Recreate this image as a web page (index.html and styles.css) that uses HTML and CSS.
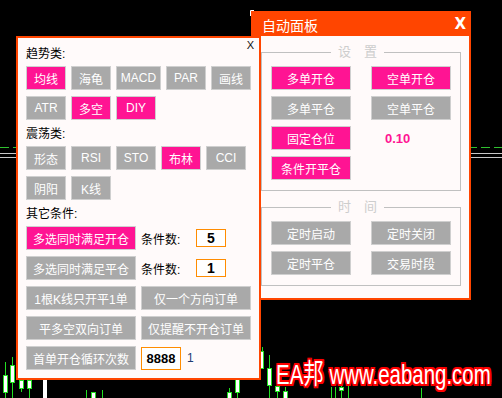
FILE: index.html
```html
<!DOCTYPE html>
<html>
<head>
  <meta charset="utf-8">
  <title>自动面板</title>
  <link rel="stylesheet" href="styles.css">
</head>
<body>
  <div class="screen">
    <svg class="chart" width="502" height="398" viewBox="0 0 502 398">
      <line x1="0" y1="147.5" x2="502" y2="147.5" stroke="#2fbf2f" stroke-dasharray="9 4"/>
      <line x1="0" y1="153.5" x2="502" y2="153.5" stroke="#c8c8c8"/>
      <line x1="0" y1="157.5" x2="502" y2="157.5" stroke="#c8c8c8"/>
      <path d="M250.5 16 V10.5 H254" stroke="#fff" fill="none"/>
      <g stroke="#22e022" fill="#fff">
        <line x1="5.5" y1="362" x2="5.5" y2="398"/>
        <rect x="3.5" y="375.5" width="4" height="17"/>
        <line x1="12.5" y1="357" x2="12.5" y2="398"/>
        <rect x="10.5" y="365.5" width="4" height="17"/>
        <line x1="21.5" y1="376" x2="21.5" y2="392"/>
        <rect x="19.5" y="380.5" width="4" height="8"/>
        <line x1="29.5" y1="376" x2="29.5" y2="398"/>
        <rect x="27.5" y="380.5" width="4" height="8"/>
        <rect x="43.5" y="378.5" width="3" height="24" stroke="#fff"/>
        <line x1="86.5" y1="390" x2="86.5" y2="398"/>
        <rect x="91.5" y="392.5" width="4" height="8"/>
        <line x1="102.5" y1="390" x2="102.5" y2="398"/>
        <line x1="229.5" y1="388" x2="229.5" y2="398"/>
        <rect x="227.5" y="392.5" width="4" height="8"/>
        <line x1="237.5" y1="370" x2="237.5" y2="398"/>
        <rect x="235.5" y="379.5" width="4" height="13"/>
        <line x1="262.5" y1="347" x2="262.5" y2="352"/>
        <rect x="260.5" y="351.5" width="3" height="17"/>
        <line x1="269.5" y1="355" x2="269.5" y2="398"/>
        <rect x="267.5" y="368.5" width="4" height="17"/>
        <line x1="277.5" y1="383" x2="277.5" y2="398"/>
        <rect x="275.5" y="386.5" width="4" height="5"/>
        <line x1="285.5" y1="387" x2="285.5" y2="398"/>
        <rect x="283.5" y="391.5" width="4" height="8"/>
        <line x1="331.5" y1="387" x2="331.5" y2="398"/>
        <line x1="335.5" y1="387" x2="335.5" y2="398"/>
        <line x1="341.5" y1="384" x2="341.5" y2="398"/>
        <rect x="339.5" y="387.5" width="4" height="3"/>
        <line x1="348.5" y1="386" x2="348.5" y2="398"/>
        <line x1="421.5" y1="388" x2="421.5" y2="398"/>
      </g>
    </svg>

    <div class="panel auto-panel">
      <div class="panel-head">
        <span class="panel-title">自动面板</span>
        <span class="panel-close">X</span>
      </div>
      <div class="panel-body">
        <fieldset class="group">
          <legend>设　置</legend>
          <div class="grid-2">
            <button class="btn on">多单开仓</button>
            <button class="btn on">空单开仓</button>
            <button class="btn">多单平仓</button>
            <button class="btn">空单平仓</button>
            <button class="btn on">固定仓位</button>
            <span class="lot-value">0.10</span>
            <button class="btn on">条件开平仓</button>
          </div>
        </fieldset>
        <fieldset class="group second">
          <legend>时　间</legend>
          <div class="grid-2">
            <button class="btn">定时启动</button>
            <button class="btn">定时关闭</button>
            <button class="btn">定时平仓</button>
            <button class="btn">交易时段</button>
          </div>
        </fieldset>
      </div>
    </div>

    <div class="panel filter-panel">
      <span class="close-x">X</span>

      <div class="sec-title">趋势类:</div>
      <div class="btn-row">
        <button class="btn s on">均线</button>
        <button class="btn s">海龟</button>
        <button class="btn m">MACD</button>
        <button class="btn s">PAR</button>
        <button class="btn s">画线</button>
      </div>
      <div class="btn-row">
        <button class="btn s">ATR</button>
        <button class="btn s on">多空</button>
        <button class="btn s on">DIY</button>
      </div>

      <div class="sec-title">震荡类:</div>
      <div class="btn-row">
        <button class="btn s">形态</button>
        <button class="btn s">RSI</button>
        <button class="btn s">STO</button>
        <button class="btn s on">布林</button>
        <button class="btn s">CCI</button>
      </div>
      <div class="btn-row">
        <button class="btn s">阴阳</button>
        <button class="btn s">K线</button>
      </div>

      <div class="sec-title">其它条件:</div>
      <div class="btn-row">
        <button class="btn l on">多选同时满足开仓</button>
        <span class="cnt-label">条件数:</span>
        <span class="num-box">5</span>
      </div>
      <div class="btn-row">
        <button class="btn l">多选同时满足平仓</button>
        <span class="cnt-label">条件数:</span>
        <span class="num-box">1</span>
      </div>
      <div class="btn-row">
        <button class="btn l">1根K线只开平1单</button>
        <button class="btn l">仅一个方向订单</button>
      </div>
      <div class="btn-row">
        <button class="btn l">平多空双向订单</button>
        <button class="btn l">仅提醒不开仓订单</button>
      </div>
      <div class="btn-row">
        <button class="btn l">首单开仓循环次数</button>
        <span class="num-box big">8888</span>
        <span class="loop-val">1</span>
      </div>
    </div>

    <div class="watermark">EA邦 www.eabang.com</div>
  </div>
</body>
</html>
```

FILE: styles.css
```css
* {
  box-sizing: border-box;
}

body {
  margin: 0;
  background: #000;
  font-family: "Liberation Sans", "Noto Sans CJK SC", sans-serif;
  font-size: 12px;
}

.screen {
  position: relative;
  width: 502px;
  height: 398px;
  overflow: hidden;
}

.chart {
  position: absolute;
  left: 0;
  top: 0;
}

/* windows */
.panel {
  position: absolute;
  background: #fffafa;
  border: 2px solid #ff4500;
}

.auto-panel {
  left: 251px;
  top: 11px;
  width: 220px;
  height: 289px;
}

.filter-panel {
  left: 16px;
  top: 36px;
  width: 245px;
  height: 344px;
  padding: 8px 7px 0 8px;
  display: flex;
  flex-direction: column;
  gap: 6px;
}

.panel-head {
  height: 23px;
  background: #ff4500;
  color: #fff;
  display: flex;
  align-items: center;
  justify-content: space-between;
  padding: 0 3px 0 9px;
}

.panel-title {
  font-size: 14px;
}

.panel-close {
  font-family: "DejaVu Sans", sans-serif;
  font-weight: bold;
  font-size: 15px;
  line-height: 15px;
}

.panel-body {
  padding: 0 8px;
}

.group {
  margin: 9px 0 0;
  padding: 7px 9px 10px;
  border: 1px solid #c0c0c0;
}

.group legend {
  margin-left: 60px;
  padding: 0 7px;
  color: #cdcdcd;
  font-size: 13px;
  line-height: 14px;
}

.grid-2 {
  display: grid;
  grid-template-columns: 80px 80px;
  column-gap: 20px;
  row-gap: 6px;
}

.lot-value {
  display: flex;
  align-items: center;
  padding-left: 14px;
  color: #ff1493;
  font-weight: bold;
  font-size: 13px;
}

/* buttons */
.btn {
  height: 24px;
  padding: 0;
  border: 1px solid #cfcfcf;
  background: #a9a9a9;
  color: #fff;
  font: inherit;
  white-space: nowrap;
}

.btn.on {
  background: #ff1493;
}

.btn.s { width: 40px; }
.btn.m { width: 45px; }
.btn.l { width: 110px; }

/* left panel */
.close-x {
  position: absolute;
  top: 2px;
  right: 5px;
  font-size: 11px;
  line-height: 11px;
  color: #111;
}

.sec-title {
  height: 14px;
  padding-top: 2px;
  line-height: 12px;
  color: #000;
}

.btn-row {
  display: flex;
  align-items: center;
  gap: 5px;
}

.cnt-label {
  width: 50px;
  color: #000;
}

.num-box {
  width: 30px;
  height: 18px;
  border: 1px solid #ff8c00;
  background: #fff;
  color: #000;
  text-align: center;
  font-weight: bold;
  font-size: 14px;
  line-height: 16px;
}

.num-box.big {
  width: 40px;
  height: 23px;
  line-height: 21px;
  font-size: 13px;
}

.loop-val {
  margin-left: 1px;
  color: #1e3c72;
}

/* site mark */
.watermark {
  position: absolute;
  left: 276px;
  top: 361px;
  font-size: 28px;
  line-height: 28px;
  color: #fff;
  white-space: nowrap;
  transform: scaleX(0.73);
  transform-origin: 0 0;
  text-shadow:
    2px 0 #f00, -2px 0 #f00, 0 2px #f00, 0 -2px #f00,
    2px 2px #f00, -2px -2px #f00, 2px -2px #f00, -2px 2px #f00,
    0 0 4px #b00000;
}
```
